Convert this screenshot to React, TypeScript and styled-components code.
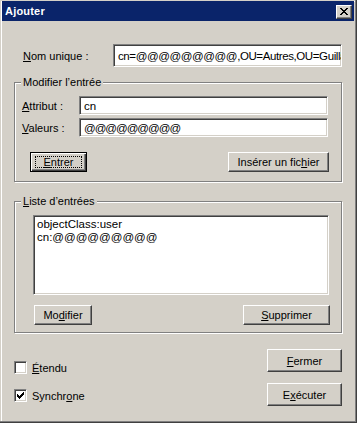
import React from 'react';
import styled, { createGlobalStyle, css } from 'styled-components';

const GlobalStyle = createGlobalStyle`
  html, body {
    margin: 0;
    padding: 0;
    background: #d4d0c8;
  }
  body {
    font-family: "Liberation Sans", Arial, sans-serif;
    font-size: 11px;
    color: #000;
  }
`;

const sunken = css`
  border: 1px solid;
  border-color: #808080 #fff #fff #808080;
  box-shadow: inset 1px 1px #404040, inset -1px -1px #d4d0c8;
`;

const Window = styled.div`
  box-sizing: border-box;
  width: 357px;
  height: 423px;
  padding: 1px 3px 0 2px;
  background: #d4d0c8;
  box-shadow: inset -1px -1px #404040, inset -2px -2px #808080,
    inset 1px 1px #d4d0c8, inset 2px 2px #fff;
  display: flex;
  flex-direction: column;
`;

const TitleBar = styled.div`
  height: 20px;
  background: #0a246a;
  display: flex;
  align-items: center;
  justify-content: space-between;
  padding: 0 2px 0 3px;
`;

const Title = styled.span`
  color: #fff;
  font-weight: bold;
  font-size: 11px;
  letter-spacing: 0.2px;
`;

const CloseButton = styled.div`
  width: 16px;
  height: 14px;
  box-sizing: border-box;
  background: #d4d0c8;
  border: 1px solid;
  border-color: #fff #404040 #404040 #fff;
  box-shadow: inset -1px -1px #808080;
  display: flex;
  align-items: center;
  justify-content: center;
  margin-top: 1px;
`;

const Body = styled.div`
  padding: 0 12px;
  display: flex;
  flex-direction: column;
`;

const NameRow = styled.div`
  margin-top: 23px;
  display: flex;
  align-items: center;
`;

const Label = styled.label<{ $width?: number; $indent?: number }>`
  width: ${(p) => p.$width ?? 57}px;
  padding-left: ${(p) => p.$indent ?? 0}px;
  box-sizing: border-box;
  flex-shrink: 0;
  white-space: nowrap;
`;

const Accel = styled.span`
  text-decoration: underline;
  text-underline-offset: 1px;
`;

const TextField = styled.input<{ $height?: number; $tight?: number }>`
  ${sunken};
  box-sizing: border-box;
  flex: 1;
  min-width: 0;
  height: ${(p) => p.$height ?? 19}px;
  padding: 0 0 0 4px;
  margin: 0;
  background: #fff;
  font-family: "Liberation Sans", Arial, sans-serif;
  font-size: 11.5px;
  letter-spacing: ${(p) => p.$tight ?? 0}px;
  color: #000;
  outline: none;
`;

const GroupBox = styled.div<{ $top: number; $pad: string }>`
  position: relative;
  margin-top: ${(p) => p.$top}px;
  padding: ${(p) => p.$pad};
  border: 1px solid #808080;
  box-shadow: inset 1px 1px #fff, 1px 1px #fff;
  display: flex;
  flex-direction: column;
`;

const Caption = styled.span`
  position: absolute;
  top: -7px;
  left: 6px;
  padding: 0 2px;
  line-height: 13px;
  background: #d4d0c8;
`;

const FieldRow = styled.div<{ $gap?: number }>`
  display: flex;
  align-items: center;
  margin-top: ${(p) => p.$gap ?? 0}px;
`;

const ButtonRow = styled.div<{ $top: number; $left?: number }>`
  display: flex;
  justify-content: space-between;
  margin-top: ${(p) => p.$top}px;
  padding-left: ${(p) => p.$left ?? 0}px;
  margin-right: -1px;
`;

const Button = styled.button<{ $w: number; $h?: number; $default?: boolean }>`
  box-sizing: border-box;
  width: ${(p) => p.$w}px;
  height: ${(p) => p.$h ?? 20}px;
  margin: 0;
  padding: 0;
  background: #d4d0c8;
  font-family: "Liberation Sans", Arial, sans-serif;
  font-size: 11px;
  color: #000;
  position: relative;
  ${(p) =>
    p.$default
      ? css`
          border: 1px solid #000;
          box-shadow: inset 1px 1px #fff, inset -1px -1px #404040,
            inset -2px -2px #808080;
        `
      : css`
          border: 1px solid;
          border-color: #fff #404040 #404040 #fff;
          box-shadow: inset -1px -1px #808080;
        `}
`;

const FocusRect = styled.span`
  position: absolute;
  inset: 3px 4px;
  border: 1px dotted #000;
  pointer-events: none;
`;

const ListBox = styled.div`
  ${sunken};
  height: 80px;
  box-sizing: border-box;
  background: #fff;
  padding: 2px 3px;
  font-size: 11.5px;
  line-height: 13px;
`;

const ListItem = styled.div`
  white-space: nowrap;
`;

const Footer = styled.div`
  display: flex;
  justify-content: space-between;
  margin-top: 16px;
`;

const CheckColumn = styled.div`
  display: flex;
  flex-direction: column;
  gap: 15px;
  padding-top: 12px;
`;

const CheckRow = styled.div`
  display: flex;
  align-items: center;
  gap: 5px;
  height: 13px;
`;

const CheckBox = styled.span`
  ${sunken};
  box-sizing: border-box;
  width: 13px;
  height: 13px;
  background: #fff;
  display: flex;
  align-items: center;
  justify-content: center;
`;

const ActionColumn = styled.div`
  display: flex;
  flex-direction: column;
  gap: 11px;
`;

const CloseIcon = () => (
  <svg width="8" height="7" viewBox="0 0 8 7" shapeRendering="crispEdges">
    <path
      d="M0 0h2v1h-2zM6 0h2v1h-2zM1 1h2v1h-2zM5 1h2v1h-2zM2 2h4v1h-4zM3 3h2v1h-2zM2 4h4v1h-4zM1 5h2v1h-2zM5 5h2v1h-2zM0 6h2v1h-2zM6 6h2v1h-2z"
      fill="#000"
    />
  </svg>
);

const CheckMark = () => (
  <svg width="7" height="7" viewBox="0 0 7 7" shapeRendering="crispEdges">
    <path d="M6 0h1v3h-1zM5 1h1v3h-1zM4 2h1v3h-1zM3 3h1v3h-1zM2 4h1v3h-1zM1 3h1v3h-1zM0 2h1v3h-1z" fill="#000" />
  </svg>
);

export default function App() {
  return (
    <>
      <GlobalStyle />
      <Window>
        <TitleBar>
          <Title>Ajouter</Title>
          <CloseButton>
            <CloseIcon />
          </CloseButton>
        </TitleBar>
        <Body>
          <NameRow>
            <Label $width={99} $indent={9}>
              <Accel>N</Accel>om unique :
            </Label>
            <TextField
              $height={23}
              $tight={-0.4}
              readOnly
              value="cn=@@@@@@@@@,OU=Autres,OU=Guillaume,DC=exemple,DC=local"
            />
          </NameRow>

          <GroupBox $top={15} $pad="13px 13px 9px 7px">
            <Caption>Modifier l’entrée</Caption>
            <FieldRow>
              <Label>
                <Accel>A</Accel>ttribut :
              </Label>
              <TextField readOnly value="cn" />
            </FieldRow>
            <FieldRow $gap={3}>
              <Label>
                <Accel>V</Accel>aleurs :
              </Label>
              <TextField readOnly $tight={-1} value="@@@@@@@@@" />
            </FieldRow>
            <ButtonRow $top={15} $left={8}>
              <Button $w={57} $default>
                <FocusRect />
                <Accel>E</Accel>ntrer
              </Button>
              <Button $w={101}>
                Insérer un fic<Accel>h</Accel>ier
              </Button>
            </ButtonRow>
          </GroupBox>

          <GroupBox $top={19} $pad="13px 12px 7px 18px">
            <Caption>
              <Accel>L</Accel>iste d’entrées
            </Caption>
            <ListBox>
              <ListItem>objectClass:user</ListItem>
              <ListItem>cn:@@@@@@@@@</ListItem>
            </ListBox>
            <ButtonRow $top={10} $left={1}>
              <Button $w={58}>
                Mo<Accel>d</Accel>ifier
              </Button>
              <Button $w={87}>
                <Accel>S</Accel>upprimer
              </Button>
            </ButtonRow>
          </GroupBox>

          <Footer>
            <CheckColumn>
              <CheckRow>
                <CheckBox />
                <span>
                  <Accel>É</Accel>tendu
                </span>
              </CheckRow>
              <CheckRow>
                <CheckBox>
                  <CheckMark />
                </CheckBox>
                <span>
                  Synchr<Accel>o</Accel>ne
                </span>
              </CheckRow>
            </CheckColumn>
            <ActionColumn>
              <Button $w={75} $h={23}>
                <Accel>F</Accel>ermer
              </Button>
              <Button $w={75} $h={23}>
                E<Accel>x</Accel>écuter
              </Button>
            </ActionColumn>
          </Footer>
        </Body>
      </Window>
    </>
  );
}
